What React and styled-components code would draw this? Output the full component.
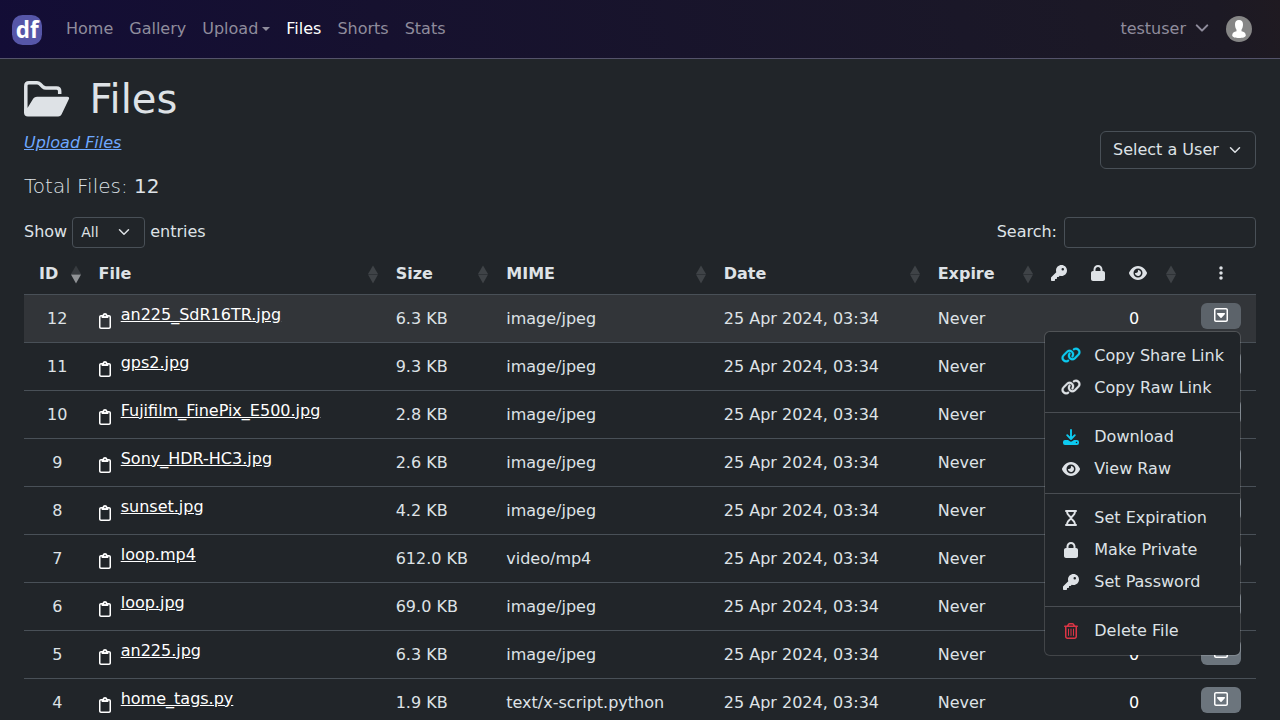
import React from "react";
import styled, { createGlobalStyle, css } from "styled-components";
import {
  FaKey, FaLock, FaEye, FaEllipsisVertical, FaRegSquareCaretDown, FaLink,
  FaRegClipboard, FaRegTrashCan,
} from "react-icons/fa6";

const GlobalStyle = createGlobalStyle`
  *, *::before, *::after { box-sizing: border-box; }
  html, body { margin: 0; height: 720px; overflow: hidden; }
  body {
    background: #212529;
    color: #dee2e6;
    font: 400 16px/24px "DejaVu Sans", sans-serif;
  }
`;

const Navbar = styled.nav`
  height: 59px;
  display: flex;
  align-items: center;
  padding: 0 24px 0 12px;
  border-bottom: 1px solid #54536a;
  background: linear-gradient(75deg, #130d36 0%, #16112f 30%, #1a1728 75%, #1c1924 95%, #1f1a21 100%);
`;
const Logo = styled.svg`
  width: 30px;
  height: 30px;
  margin: 2px 16px 0 0;
`;
const NavLink = styled.a`
  padding: 0 8px;
  margin-top: -1px;
  display: flex;
  align-items: center;
  color: ${(p) => (p.$active ? "#fff" : "#8f8c9c")};
`;
const Caret = styled.span`
  margin-left: 4px;
  border-top: 4.8px solid;
  border-left: 4.8px solid transparent;
  border-right: 4.8px solid transparent;
`;
const UserMenu = styled.div`
  margin-left: auto;
  display: flex;
  align-items: center;
  color: #8f8c9c;
`;
const UserName = styled.span`
  margin: -1px 9px 0 0;
`;
const Avatar = styled.svg`
  width: 26px;
  height: 26px;
  margin: 0 4px 0 17px;
`;
const Chevron = styled.svg`
  width: ${(p) => p.$size || 12}px;
  height: ${(p) => p.$size || 12}px;
  margin-top: ${(p) => p.$lift || 0}px;
  fill: none;
  stroke: currentColor;
  stroke-width: ${(p) => p.$weight || 2};
  stroke-linecap: round;
  stroke-linejoin: round;
`;

const Page = styled.main`
  padding: 0 24px;
`;
const Title = styled.h1`
  margin: 16px 0 8px;
  height: 48px;
  display: flex;
  align-items: center;
  font-size: 40px;
  line-height: 48px;
  font-weight: 400;
  svg { width: 46px; height: 36px; margin: -1px 19.5px 0 0; }
`;
const SubHeader = styled.div`
  display: flex;
  justify-content: space-between;
  align-items: flex-start;
  height: 38px;
`;
const UploadLink = styled.a`
  color: #6ea8fe;
  font-style: italic;
  text-decoration: underline;
`;
const Select = styled.div`
  display: flex;
  align-items: center;
  justify-content: space-between;
  border: 1px solid #495057;
  border-radius: ${(p) => (p.$small ? 4 : 6)}px;
  width: ${(p) => (p.$small ? 73 : 156)}px;
  height: ${(p) => (p.$small ? 31 : 38)}px;
  padding: ${(p) => (p.$small ? "0 14px 1px 8px" : "0 14px 0 12px")};
  font-size: ${(p) => (p.$small ? 14 : 16)}px;
`;
const Total = styled.p`
  margin: 2px 0 16px;
  font-size: 20px;
  line-height: 30px;
  font-weight: 300;
  font-family: "DejaVu Sans Light", "DejaVu Sans", sans-serif;
  strong { font-weight: 400; font-family: "DejaVu Sans", sans-serif; }
`;
const Controls = styled.div`
  display: flex;
  justify-content: space-between;
  height: 31px;
`;
const Label = styled.label`
  display: flex;
  align-items: center;
  gap: ${(p) => p.$gap}px;
  span { margin-top: -2px; }
`;
const SearchInput = styled.input`
  width: 192px;
  height: 31px;
  border: 1px solid #495057;
  border-radius: 4px;
  background: transparent;
`;

const Table = styled.div`
  margin-top: 5px;
`;
const Row = styled.div`
  display: grid;
  grid-template-columns: 66.5px 297.2px 110.6px 217.5px 213.9px 113.8px 39.5px 38px 65px 70px;
  align-items: center;
  height: 48px;
  border-bottom: 1px solid #495057;
  background: ${(p) => (p.$hover ? "#323539" : "transparent")};
`;
const HeadRow = styled(Row)`
  height: 42px;
  font-weight: 700;
`;
const Cell = styled.div`
  display: flex;
  align-items: center;
  height: 24px;
  padding-left: ${(p) => p.$pad ?? 8}px;
  color: ${(p) => (p.$bright ? "#fff" : "inherit")};
  ${(p) => p.$center && css`justify-content: center; padding: 0;`}
`;
const HeadCell = styled(Cell)`
  justify-content: space-between;
  padding-right: 10px;
`;
const IconCell = styled(Cell)`
  svg { width: ${(p) => p.$w}px; height: 16px; margin-top: -2px; }
`;
const SortableIconCell = styled(HeadCell)`
  svg:first-child { width: 18px; height: 16px; margin-top: -2px; }
`;
const Sort = styled.svg`
  width: 10px;
  height: 20px;
  margin-top: 3px;
`;
const FileCell = styled(Cell)`
  color: #fff;
  svg { width: 12px; height: 16px; margin: 5px 10.2px 0 0; }
`;
const FileLink = styled.a`
  text-decoration: underline;
  margin-top: -8px;
`;
const ActionButton = styled.button`
  width: 40px;
  height: 26px;
  margin: -6px 0 0 15px;
  padding: 0 0 2px;
  border: 0;
  border-radius: 6px;
  display: flex;
  align-items: center;
  justify-content: center;
  background: ${(p) => (p.$active ? "#5c636a" : "#6c757d")};
  color: #fff;
  svg { width: 14px; height: 16px; }
`;
const ActionCell = styled.div`
  position: relative;
`;
const Menu = styled.div`
  position: absolute;
  z-index: 2;
  top: 22px;
  right: 15px;
  width: 197px;
  padding: 8px 0;
  background: #212529;
  background-clip: padding-box;
  border: 1px solid rgba(255, 255, 255, 0.15);
  border-radius: 6px;
`;
const MenuItem = styled.div`
  height: 32px;
  display: flex;
  align-items: center;
  padding-left: 16px;
  white-space: nowrap;
`;
const MenuIcon = styled.span`
  width: 20px;
  margin-right: 13.3px;
  display: flex;
  justify-content: center;
  color: ${(p) => p.$color || "inherit"};
  svg { height: 16px; width: ${(p) => p.$w}px; flex: none; }
`;
const ChainLink = styled(FaLink)`
  margin-top: -1px;
  stroke: currentColor;
  stroke-width: 10px;
`;
const Divider = styled.hr`
  margin: 8px 0;
  border: 0;
  border-top: 1px solid #494d52;
`;

const SortIcon = ({ desc }) => (
  <Sort viewBox="0 0 10 20">
    <path d="M0 9 5 0.5 10 9Z" fill={desc ? "#373b3f" : "#3f4347"} />
    <path d="M0 9.5H10L5 18.5Z" fill={desc ? "#909396" : "#3f4347"} />
  </Sort>
);
const Down = ({ size, weight, lift }) => (
  <Chevron $size={size} $weight={weight} $lift={lift} viewBox="0 0 16 16"><path d="m2 5 6 6 6-6" /></Chevron>
);
const FolderIcon = () => (
  <svg viewBox="0 0 46 36">
    <path d="M1.8 30V5Q1.8 1.800 5 1.800H13q1.700 0 3 1.200l3 2.900q1.300 1.200 3 1.200h10.500q3.200 0 3.200 3.200V13" fill="none" stroke="currentColor" strokeWidth="3.500" />
    <path d="M0 28 3.800 26.500 9.300 17.500Q10.500 15.800 13 15.800H43.200Q46 15.800 44.800 18.300L37.500 33.500Q36.500 35.500 34.200 35.500H4Q0 35.500 0 31.500Z" fill="currentColor" />
  </svg>
);
const DownloadIcon = () => (
  <svg viewBox="0 0 16 16" fill="none" stroke="currentColor">
    <path d="M8 1v8.500M4.200 6.200 8 10l3.800-3.800" strokeWidth="1.9" strokeLinecap="round" strokeLinejoin="round" />
    <path fill="currentColor" stroke="none" fillRule="evenodd" d="M2 11h3l1.900 1.300a2 2 0 0 0 2.200 0L11 11h3a2 2 0 0 1 2 2v1a2 2 0 0 1-2 2H2a2 2 0 0 1-2-2v-1a2 2 0 0 1 2-2Zm11.500 1.800a.75.75 0 1 0 0 1.500.75.75 0 0 0 0-1.500Z" />
  </svg>
);
const HourglassIcon = () => (
  <svg viewBox="0 0 12 16" fill="none" stroke="currentColor" strokeWidth="2" strokeLinecap="round">
    <path d="M1 1h10M1 15h10M2.200 1v1.800C2.200 5 6 6.500 6 8S2.200 11 2.200 13.200V15M9.800 1v1.800C9.800 5 6 6.500 6 8s3.800 3 3.800 5.200V15" />
  </svg>
);

const files = [
  [12, "an225_SdR16TR.jpg", "6.3 KB", "image/jpeg"],
  [11, "gps2.jpg", "9.3 KB", "image/jpeg"],
  [10, "Fujifilm_FinePix_E500.jpg", "2.8 KB", "image/jpeg"],
  [9, "Sony_HDR-HC3.jpg", "2.6 KB", "image/jpeg"],
  [8, "sunset.jpg", "4.2 KB", "image/jpeg"],
  [7, "loop.mp4", "612.0 KB", "video/mp4"],
  [6, "loop.jpg", "69.0 KB", "image/jpeg"],
  [5, "an225.jpg", "6.3 KB", "image/jpeg"],
  [4, "home_tags.py", "1.9 KB", "text/x-script.python"],
];
const menuGroups = [
  [["Copy Share Link", ChainLink, 20, "#0dcaf0"], ["Copy Raw Link", ChainLink, 20]],
  [["Download", DownloadIcon, 16, "#0dcaf0"], ["View Raw", FaEye, 18]],
  [["Set Expiration", HourglassIcon, 12], ["Make Private", FaLock, 14], ["Set Password", FaKey, 16]],
  [["Delete File", FaRegTrashCan, 14, "#dc3545"]],
];

const ActionsMenu = () => (
  <Menu>
    {menuGroups.map((group, i) => (
      <React.Fragment key={i}>
        {i > 0 && <Divider />}
        {group.map(([label, Icon, width, color]) => (
          <MenuItem key={label}>
            <MenuIcon $color={color} $w={width}><Icon /></MenuIcon>
            {label}
          </MenuItem>
        ))}
      </React.Fragment>
    ))}
  </Menu>
);

export default function App() {
  return (
    <>
      <GlobalStyle />
      <Navbar>
        <Logo viewBox="0 0 30 30">
          <rect width="30" height="30" rx="10.500" fill="#5656a8" />
          <text x="15.200" y="23.200" textAnchor="middle" fill="#fff" fontFamily="Open Sans" fontWeight="700" fontSize="22.500">df</text>
        </Logo>
        <NavLink>Home</NavLink>
        <NavLink>Gallery</NavLink>
        <NavLink>Upload<Caret /></NavLink>
        <NavLink $active>Files</NavLink>
        <NavLink>Shorts</NavLink>
        <NavLink>Stats</NavLink>
        <UserMenu>
          <UserName>testuser</UserName>
          <Down size={14} weight={2.4} lift={-2} />
          <Avatar viewBox="0 0 26 26">
            <circle cx="13" cy="13" r="13" fill="#868686" />
            <path fill="#fff" d="M13 4c-2.700 0-4.200 1.900-4 4.700.1 2.300.7 4 1.500 5v1.500c-2.500.5-4.300 1.600-4.300 4.300 0 1.700 3.300 2.500 6.800 2.500s6.800-.8 6.800-2.500c0-2.700-1.800-3.800-4.300-4.300v-1.500c.8-1 1.400-2.700 1.500-5C17.200 5.900 15.700 4 13 4Z" />
          </Avatar>
        </UserMenu>
      </Navbar>
      <Page>
        <Title><FolderIcon />Files</Title>
        <SubHeader>
          <UploadLink>Upload Files</UploadLink>
          <Select>Select a User<Down /></Select>
        </SubHeader>
        <Total>Total Files: <strong>12</strong></Total>
        <Controls>
          <Label $gap={5}><span>Show</span><Select $small>All<Down /></Select><span>entries</span></Label>
          <Label $gap={7}><span>Search:</span><SearchInput /></Label>
        </Controls>
        <Table>
          <HeadRow>
            <HeadCell $pad={15}>ID<SortIcon desc /></HeadCell>
            <HeadCell>File<SortIcon /></HeadCell>
            <HeadCell>Size<SortIcon /></HeadCell>
            <HeadCell>MIME<SortIcon /></HeadCell>
            <HeadCell>Date<SortIcon /></HeadCell>
            <HeadCell>Expire<SortIcon /></HeadCell>
            <IconCell $w={16}><FaKey /></IconCell>
            <IconCell $w={14}><FaLock /></IconCell>
            <SortableIconCell><FaEye /><SortIcon /></SortableIconCell>
            <IconCell $center $w={16}><FaEllipsisVertical /></IconCell>
          </HeadRow>
          {files.map(([id, name, size, mime], i) => (
            <Row key={id} $hover={i === 0}>
              <Cell $center>{id}</Cell>
              <FileCell><FaRegClipboard /><FileLink>{name}</FileLink></FileCell>
              <Cell>{size}</Cell>
              <Cell>{mime}</Cell>
              <Cell>25 Apr 2024, 03:34</Cell>
              <Cell>Never</Cell>
              <Cell />
              <Cell />
              <Cell $bright>0</Cell>
              <ActionCell>
                <ActionButton $active={i === 0}><FaRegSquareCaretDown /></ActionButton>
                {i === 0 && <ActionsMenu />}
              </ActionCell>
            </Row>
          ))}
        </Table>
      </Page>
    </>
  );
}
